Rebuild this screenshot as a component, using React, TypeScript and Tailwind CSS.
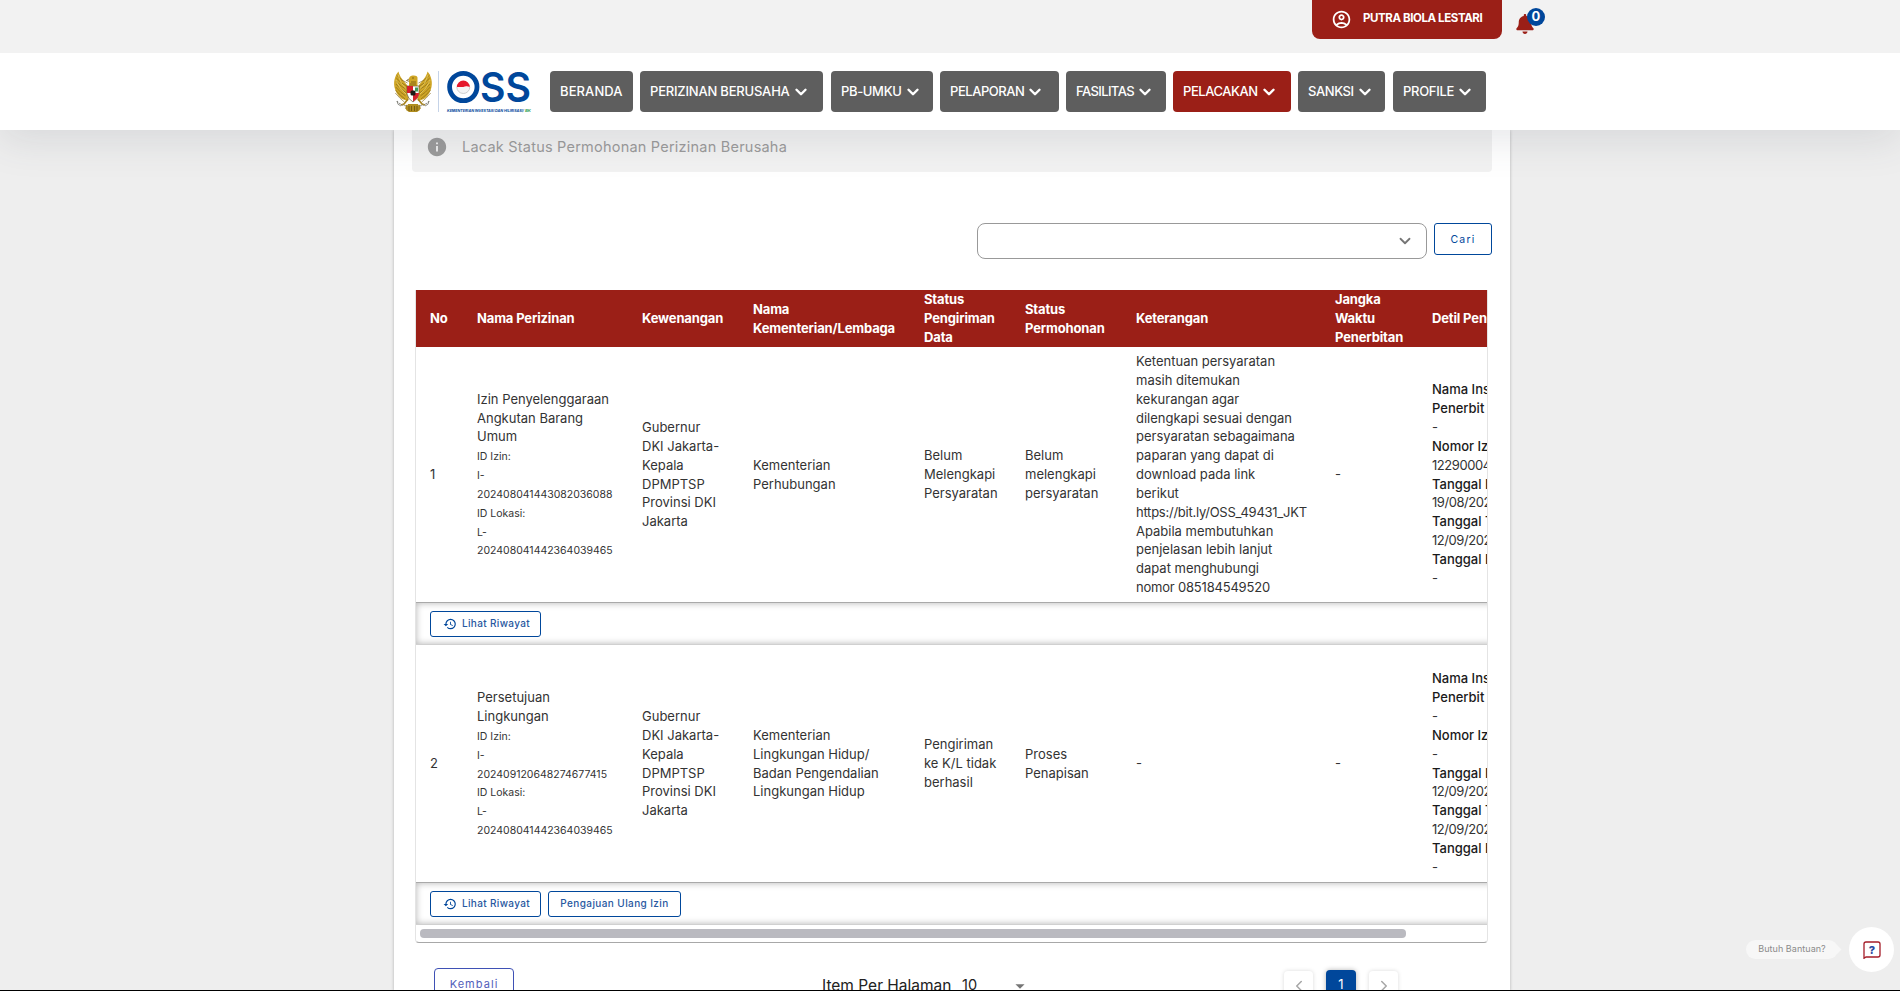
import React from "react";
import { MdOutlineAccountCircle, MdInfo, MdHistory, MdArrowDropDown } from "react-icons/md";
import { FaBell } from "react-icons/fa";
import { ChevronDown, ChevronLeft, ChevronRight } from "lucide-react";

function Garuda() {
  const feathers = [0, 1, 2, 3, 4, 5, 6];
  return (
    <svg viewBox="0 0 40 41" className="h-[41px] w-[40px]">
      {[1, -1].map((s) => (
        <g key={s} transform={s === 1 ? undefined : "translate(40 0) scale(-1 1)"}>
          <path d="M5.500 .5C1.500 5 0 12 2 18c1 4 4 8 7 10l6 2 2-9-3-7C11 10 6.500 6 5.500 .5Z" fill="#cfa626" />
          {feathers.map((i) => (
            <path key={i} d={`M${3.5 - i * 0.2} ${4 + i * 3}q5 6 ${11 - i * 0.3} ${8 + i * 0.2}`} fill="none" stroke="#7a5e14" strokeWidth="0.6" />
          ))}
          <path d="M5 4q2 9 10 16M3 9q3 9 10 14" fill="none" stroke="#f3dc79" strokeWidth="0.6" />
          <path d="M15 28l-4 5-3 1m6 0-1 4" stroke="#a8841d" strokeWidth="1.700" fill="none" />
          <path d="M4 30q3 5 13 5" stroke="#8d8d88" strokeWidth="1.100" strokeDasharray="2 1" fill="none" />
          <path d="M4 30q0 4 4 5" stroke="#77776f" strokeWidth="0.800" fill="none" />
        </g>
      ))}
      <path d="M15 33h10l2 6-3 2H16l-3-2Z" fill="#b08d1e" />
      <path d="M16 35v5m2.500-5v5m3-5v5m2.500-5v5" stroke="#5f490f" strokeWidth="0.700" />
      <path d="M16 15V9q-.5-4 3.500-4.500 4.500-.500 5 2V15Z" fill="#cfa626" />
      <path d="M16 8l-2.500 1.500 2.800.8M19 7h2M18 11h5M17 13h6" stroke="#6f5512" strokeWidth="0.800" fill="none" />
      <path d="M14 15h12v8q-1 5-6 8-5-3-6-8Z" fill="#fff" stroke="#4b3a12" strokeWidth="0.600" />
      <path d="M14 15h6v7h-6ZM20 22h6q0 5-6 8.500Z" fill="#d5202c" />
      <path d="M22 16.500h3v4h-3Z" fill="#3f9a5c" />
      <rect x="17.500" y="19.500" width="5" height="5" rx="1.500" fill="#1c1a18" />
    </svg>
  );
}

function OssMark() {
  return (
    <svg viewBox="0 0 84 41" className="h-[41px] w-[84px] overflow-visible">
      <circle cx="16.300" cy="16" r="13.700" fill="none" stroke="#00479b" strokeWidth="4.800" />
      <path d="M9.800 16a6.500 6.500 0 0 1 13 0q-3.500-1.600-6.500 0t-6.500 0Z" fill="#e5182b" />
      <path d="M9.800 16a6.500 6.500 0 0 0 13 0" fill="#f5f5f5" stroke="#c9c9c9" strokeWidth="0.900" />
      <text x="33" y="31" fontFamily="Inter, sans-serif" fontWeight="600" fontSize="41.500" fill="#00479b" textLength="51" lengthAdjust="spacingAndGlyphs">SS</text>
      <text x="0" y="41" fontFamily="Inter, sans-serif" fontWeight="700" fontStyle="italic" fontSize="3.800" fill="#00479b" textLength="77" lengthAdjust="spacingAndGlyphs">KEMENTERIAN INVESTASI DAN HILIRISASI/</text>
      <text x="78" y="41" fontFamily="Inter, sans-serif" fontWeight="700" fontStyle="italic" fontSize="3.800" fill="#36a152" textLength="6" lengthAdjust="spacingAndGlyphs">BK</text>
    </svg>
  );
}

const NAV = [
  { label: "BERANDA", box: "w-[83px] mr-[7px]", text: "tracking-[0.1px]", arrow: false },
  { label: "PERIZINAN BERUSAHA", box: "w-[183px] mr-2", text: "tracking-[-0.2px]", arrow: true },
  { label: "PB-UMKU", box: "w-[102px] mr-[7px]", text: "tracking-[-0.35px]", arrow: true },
  { label: "PELAPORAN", box: "w-[119px] mr-[7px]", text: "tracking-[-0.45px]", arrow: true },
  { label: "FASILITAS", box: "w-[100px] mr-[7px]", text: "tracking-[-0.6px]", arrow: true },
  { label: "PELACAKAN", box: "w-[118px] mr-[7px]", text: "tracking-[-0.45px]", arrow: true, active: true },
  { label: "SANKSI", box: "w-[87px] mr-2", text: "tracking-[-0.4px]", arrow: true },
  { label: "PROFILE", box: "w-[93px]", text: "tracking-[-0.3px]", arrow: true },
];

const COLS = "grid grid-cols-[47px_165px_111px_171px_101px_111px_199px_97px_200px] w-[1217px] items-center whitespace-pre text-[13px] leading-[18.850px]";

const HEAD = [
  "No",
  "Nama Perizinan",
  "Kewenangan",
  "Nama\nKementerian/Lembaga",
  "Status\nPengiriman\nData",
  "Status\nPermohonan",
  "Keterangan",
  "Jangka\nWaktu\nPenerbitan",
  "Detil Penerbitan",
];

type Row = {
  no: string;
  name: string;
  ids: string;
  cells: React.ReactNode[];
  detail: [string, string][];
  height: string;
};

const KEWENANGAN = "Gubernur\nDKI Jakarta-\nKepala\nDPMPTSP\nProvinsi DKI\nJakarta";

const ROWS: Row[] = [
  {
    no: "1",
    name: "Izin Penyelenggaraan\nAngkutan Barang\nUmum",
    ids: "ID Izin:\nI-\n202408041443082036088\nID Lokasi:\nL-\n202408041442364039465",
    cells: [
      KEWENANGAN,
      "Kementerian\nPerhubungan",
      "Belum\nMelengkapi\nPersyaratan",
      "Belum\nmelengkapi\npersyaratan",
      <>
        {"Ketentuan persyaratan\nmasih ditemukan\nkekurangan agar\ndilengkapi sesuai dengan\npersyaratan sebagaimana\npaparan yang dapat di\ndownload pada link\nberikut\n"}
        <span className="tracking-[-0.25px]">https://bit.ly/OSS_49431_JKT</span>
        {"\nApabila membutuhkan\npenjelasan lebih lanjut\ndapat menghubungi\n"}
        <span className="tracking-[-0.2px]">nomor 085184549520</span>
      </>,
      "-",
    ],
    detail: [
      ["Nama Instansi\nPenerbit", "-"],
      ["Nomor Izin", "12290004"],
      ["Tanggal Izin", "19/08/2024"],
      ["Tanggal Terbit", "12/09/2024"],
      ["Tanggal Berlaku", "-"],
    ],
    height: "h-[255px]",
  },
  {
    no: "2",
    name: "Persetujuan\nLingkungan",
    ids: "ID Izin:\nI-\n202409120648274677415\nID Lokasi:\nL-\n202408041442364039465",
    cells: [
      KEWENANGAN,
      "Kementerian\nLingkungan Hidup/\nBadan Pengendalian\nLingkungan Hidup",
      "Pengiriman\nke K/L tidak\nberhasil",
      "Proses\nPenapisan",
      "-",
      "-",
    ],
    detail: [
      ["Nama Instansi\nPenerbit", "-"],
      ["Nomor Izin", "-"],
      ["Tanggal Izin", "12/09/2024"],
      ["Tanggal Terbit", "12/09/2024"],
      ["Tanggal Berlaku", "-"],
    ],
    height: "h-[237px]",
  },
];

function ActionRow({ resubmit }: { resubmit?: boolean }) {
  const btn = "flex h-[26px] items-center rounded-[3px] border border-[#00479b] bg-white text-[10px] font-medium text-[#27589f]";
  return (
    <div className="flex h-[43px] w-[1217px] items-center gap-[7px] border-y border-y-[#a9a9a9] border-b-[#d0d0d0] pl-[14px] shadow-[inset_0_0_7px_rgba(0,0,0,0.3)]">
      <button className={`${btn} w-[111px] gap-[5px] pl-[12px] tracking-[0.35px]`}>
        <MdHistory className="size-[14px] text-[#00479b]" />
        Lihat Riwayat
      </button>
      {resubmit && <button className={`${btn} w-[133px] justify-center tracking-[0.4px]`}>Pengajuan Ulang Izin</button>}
    </div>
  );
}

export default function App() {
  return (
    <div className="relative flex h-[991px] w-[1900px] flex-col overflow-hidden bg-[#eeeeee] font-['Inter',sans-serif] text-[#333]">
      <div className="relative z-20 flex h-[53px] shrink-0 items-start bg-[#f2f2f2] pl-[1312px]">
        <button className="flex h-[39px] w-[190px] items-center rounded-b-[8px] bg-[#9b1f17] pb-px pl-[19px] text-white">
          <MdOutlineAccountCircle className="size-[21px]" />
          <span className="ml-[11px] whitespace-nowrap text-[11.500px] font-bold tracking-[-0.4px]">PUTRA BIOLA LESTARI</span>
        </button>
        <div className="relative ml-[14px] mt-[14px]">
          <FaBell className="h-[20px] w-[18px] text-[#9b1f17]" />
          <span className="absolute -top-[6px] left-[11px] flex size-[18px] items-center justify-center rounded-full bg-[#00479b] text-[13px] font-bold text-white">0</span>
        </div>
      </div>

      <header className="relative z-10 flex h-[77px] shrink-0 items-center bg-white pl-[393px] shadow-[0_10px_40px_rgba(60,66,87,0.13)]">
        <Garuda />
        <div className="ml-[5px] h-[41px] w-px bg-[#c5d3e8]" />
        <div className="ml-[8px]">
          <OssMark />
        </div>
        <nav className="ml-[19px] flex">
          {NAV.map((n) => (
            <button
              key={n.label}
              className={`flex h-[41px] shrink-0 items-center whitespace-nowrap rounded-[4px] pl-[10px] pt-px text-[13px] font-medium text-white ${n.box} ${n.active ? "bg-[#9b1f17]" : "bg-[#5e5e5e]"}`}
            >
              <span className={n.text}>{n.label}</span>
              {n.arrow && <ChevronDown className="mb-px ml-[2px] size-[18px]" strokeWidth={3.2} />}
            </button>
          ))}
        </nav>
      </header>

      <main className="ml-[394px] flex w-[1116px] grow flex-col bg-white px-[18px] shadow-[0_0_3px_rgba(0,0,0,0.25)]">
        <div className="flex h-[42px] shrink-0 items-center rounded-b-[4px] bg-[#f2f2f2] pb-[9px] pl-[14px] text-[#9b9b9b]">
          <MdInfo className="size-[22px]" />
          <span className="ml-[14px] text-[14.500px] tracking-[0.220px]">Lacak Status Permohonan Perizinan Berusaha</span>
        </div>

        <div className="mt-[51px] flex items-start justify-end gap-[7px]">
          <div className="flex h-[36px] w-[450px] items-center justify-end rounded-[8px] border border-[#999] pr-[12px]">
            <ChevronDown className="size-[18px] text-[#757575]" strokeWidth={2.4} />
          </div>
          <button className="h-[32px] w-[58px] rounded-[3px] border border-[#00479b] pt-px text-[10.500px] tracking-[1.200px] text-[#00479b]">Cari</button>
        </div>

        <section className="ml-[3px] mt-[31px] h-[653px] w-[1073px] shrink-0 overflow-hidden rounded-b-[4px] border-x border-b border-x-[#e4e4e4] border-b-[#a8a8a8]">
          <div className={`${COLS} h-[57px] bg-[#9b1f17] pl-[14px] font-bold tracking-[-0.150px] text-white`}>
            {HEAD.map((h) => (
              <div key={h}>{h}</div>
            ))}
          </div>
          {ROWS.map((r, i) => (
            <React.Fragment key={r.no}>
              <div className={`${COLS} ${r.height} pl-[14px]`}>
                <div>{r.no}</div>
                <div>
                  <div>{r.name}</div>
                  <div className="-mb-[2px] mt-[2px] text-[10.500px]">{r.ids}</div>
                </div>
                {r.cells.map((c, j) => (
                  <div key={j}>{c}</div>
                ))}
                <div className="pt-[19px]">
                  {r.detail.map(([k, v]) => (
                    <div key={k}>
                      <div className="font-medium text-[#1a1a1a]">{k}</div>
                      <div className="tracking-[-0.450px]">{v}</div>
                    </div>
                  ))}
                </div>
              </div>
              <ActionRow resubmit={i === 1} />
            </React.Fragment>
          ))}
          <div className="ml-[4px] mt-1 h-[9px] w-[986px] rounded-[4px] bg-[#babac0]" />
        </section>

        <footer className="flex h-[48px] shrink-0 items-start overflow-hidden pl-[22px] pt-[25px]">
          <button className="h-[32px] w-[80px] shrink-0 rounded-[4px] border border-[#3f51b5] pt-px text-[11px] tracking-[1.050px] text-[#5260bb]">Kembali</button>
          <span className="ml-[308px] mt-[6px] w-[140px] shrink-0 whitespace-nowrap text-[15.500px] leading-6 text-[#222]">Item Per Halaman</span>
          <span className="mt-[5px] w-[47px] text-[14.500px] leading-6 text-[#222]">10</span>
          <MdArrowDropDown className="mt-[7px] size-[22px] text-[#757575]" />
          <div className="ml-[253px] mt-[3px] flex text-[#a6a6a6]">
            <span className="flex h-[29px] w-[29px] items-center justify-center rounded-[4px] shadow-[0_0_4px_rgba(0,0,0,0.15)]">
              <ChevronLeft className="size-[18px]" />
            </span>
            <span className="-mt-px ml-[13px] flex h-[30px] w-[30px] items-center justify-center rounded-[4px] bg-[#00479b] text-[13px] text-white shadow-[0_0_5px_rgba(0,0,0,0.3)]">1</span>
            <span className="ml-[13px] flex h-[29px] w-[29px] items-center justify-center rounded-[4px] shadow-[0_0_4px_rgba(0,0,0,0.15)]">
              <ChevronRight className="size-[18px]" />
            </span>
          </div>
        </footer>
      </main>

      <div className="absolute left-[1746px] top-[927px] z-20 flex items-center">
        <div className="relative flex h-[19px] w-[92px] items-center justify-center rounded-full bg-[#f7f7f7] pb-px text-[9px] tracking-[0.050px] text-[#8b8b8b]">
          Butuh Bantuan?
          <span className="absolute -right-[2px] top-[6px] size-[7px] rotate-45 bg-[#f7f7f7]" />
        </div>
        <div className="ml-[11px] flex size-[45px] items-center justify-center rounded-full bg-white">
          <svg viewBox="0 0 18 18" className="mt-px size-[18px]">
            <path d="M1 17.300V3a2 2 0 0 1 2-2h12a2 2 0 0 1 2 2v11a2 2 0 0 1-2 2H3Z" fill="none" stroke="#a51c28" strokeWidth="1.300" />
            <text x="9" y="12.800" textAnchor="middle" fontFamily="Inter, sans-serif" fontWeight="800" fontSize="11" fill="#2b4aa0">?</text>
          </svg>
        </div>
      </div>
      <div className="absolute inset-x-0 bottom-0 z-30 h-px bg-black" />
    </div>
  );
}
